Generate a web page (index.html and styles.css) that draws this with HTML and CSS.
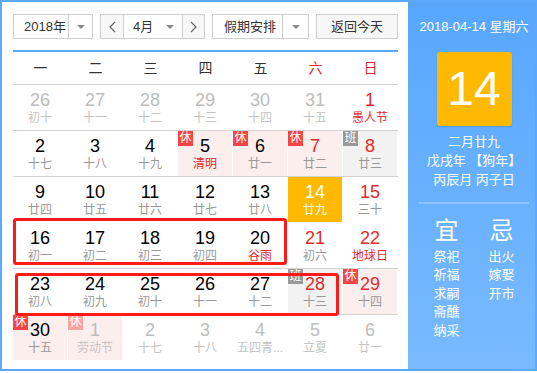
FILE: index.html
```html
<!DOCTYPE html>
<html lang="zh-CN">
<head>
<meta charset="utf-8">
<title>万年历</title>
<link rel="stylesheet" href="styles.css">
</head>
<body>
<div class="cal">
  <div class="main">
    <div class="toolbar">
      <div class="box year">
        <span class="txt">2018年</span>
        <span class="arr"><i class="tri"></i></span>
      </div>
      <div class="box month">
        <span class="nav"><svg width="7" height="12" viewBox="0 0 7 12"><polyline points="6,1 1,6 6,11" fill="none" stroke="#666" stroke-width="1.2"/></svg></span>
        <span class="mtxt">4月<i class="tri"></i></span>
        <span class="nav nav-r"><svg width="7" height="12" viewBox="0 0 7 12"><polyline points="1,1 6,6 1,11" fill="none" stroke="#666" stroke-width="1.2"/></svg></span>
      </div>
      <div class="box holiday">
        <span class="txt">假期安排</span>
        <span class="arr"><i class="tri"></i></span>
      </div>
      <div class="box btn">返回今天</div>
    </div>

    <div class="weekhead">
      <span>一</span><span>二</span><span>三</span><span>四</span><span>五</span><span class="red">六</span><span class="red">日</span>
    </div>

    <div class="rows">
      <div class="row">
        <div class="c o"><div class="n">26</div><div class="l">初十</div></div>
        <div class="c o"><div class="n">27</div><div class="l">十一</div></div>
        <div class="c o"><div class="n">28</div><div class="l">十二</div></div>
        <div class="c o"><div class="n">29</div><div class="l">十三</div></div>
        <div class="c o"><div class="n">30</div><div class="l">十四</div></div>
        <div class="c o"><div class="n">31</div><div class="l">十五</div></div>
        <div class="c r f"><div class="n">1</div><div class="l">愚人节</div></div>
      </div>
      <div class="row">
        <div class="c"><div class="n">2</div><div class="l">十七</div></div>
        <div class="c"><div class="n">3</div><div class="l">十八</div></div>
        <div class="c"><div class="n">4</div><div class="l">十九</div></div>
        <div class="c h f"><span class="tag">休</span><div class="n">5</div><div class="l">清明</div></div>
        <div class="c h"><span class="tag">休</span><div class="n">6</div><div class="l">廿一</div></div>
        <div class="c h r"><span class="tag">休</span><div class="n">7</div><div class="l">廿二</div></div>
        <div class="c w r"><span class="tag ban">班</span><div class="n">8</div><div class="l">廿三</div></div>
      </div>
      <div class="row row-today">
        <div class="c"><div class="n">9</div><div class="l">廿四</div></div>
        <div class="c"><div class="n">10</div><div class="l">廿五</div></div>
        <div class="c"><div class="n">11</div><div class="l">廿六</div></div>
        <div class="c"><div class="n">12</div><div class="l">廿七</div></div>
        <div class="c"><div class="n">13</div><div class="l">廿八</div></div>
        <div class="c t"><div class="n">14</div><div class="l">廿九</div></div>
        <div class="c r"><div class="n">15</div><div class="l">三十</div></div>
      </div>
      <div class="row">
        <div class="c"><div class="n">16</div><div class="l">初一</div></div>
        <div class="c"><div class="n">17</div><div class="l">初二</div></div>
        <div class="c"><div class="n">18</div><div class="l">初三</div></div>
        <div class="c"><div class="n">19</div><div class="l">初四</div></div>
        <div class="c f"><div class="n">20</div><div class="l">谷雨</div></div>
        <div class="c r"><div class="n">21</div><div class="l">初六</div></div>
        <div class="c r f"><div class="n">22</div><div class="l">地球日</div></div>
      </div>
      <div class="row">
        <div class="c"><div class="n">23</div><div class="l">初八</div></div>
        <div class="c"><div class="n">24</div><div class="l">初九</div></div>
        <div class="c"><div class="n">25</div><div class="l">初十</div></div>
        <div class="c"><div class="n">26</div><div class="l">十一</div></div>
        <div class="c"><div class="n">27</div><div class="l">十二</div></div>
        <div class="c w r"><span class="tag ban">班</span><div class="n">28</div><div class="l">十三</div></div>
        <div class="c h r"><span class="tag">休</span><div class="n">29</div><div class="l">十四</div></div>
      </div>
      <div class="row">
        <div class="c h"><span class="tag">休</span><div class="n">30</div><div class="l">十五</div></div>
        <div class="c h o"><span class="tag fade">休</span><div class="n">1</div><div class="l">劳动节</div></div>
        <div class="c o"><div class="n">2</div><div class="l">十七</div></div>
        <div class="c o"><div class="n">3</div><div class="l">十八</div></div>
        <div class="c o"><div class="n">4</div><div class="l">五四青...</div></div>
        <div class="c o"><div class="n">5</div><div class="l">立夏</div></div>
        <div class="c o"><div class="n">6</div><div class="l">廿一</div></div>
      </div>
    </div>
  </div>

  <div class="side">
    <div class="date">2018-04-14 星期六</div>
    <div class="today">14</div>
    <div class="lunar">
      <div>二月廿九</div>
      <div>戊戌年 【狗年】</div>
      <div>丙辰月 丙子日</div>
    </div>
    <div class="divider"></div>
    <div class="yiji">
      <div class="col">
        <div class="big">宜</div>
        <div class="items"><div>祭祀</div><div>祈福</div><div>求嗣</div><div>斋醮</div><div>纳采</div></div>
      </div>
      <div class="col">
        <div class="big">忌</div>
        <div class="items"><div>出火</div><div>嫁娶</div><div>开市</div></div>
      </div>
    </div>
  </div>

  <div class="mark mark1"></div>
  <div class="mark mark2"></div>
</div>
</body>
</html>
```

FILE: styles.css
```css
body {
  margin: 0;
  font-family: "Liberation Sans", "Noto Sans CJK SC", sans-serif;
  background: #fff;
}

.cal {
  position: relative;
  display: flex;
  width: 537px;
  height: 371px;
  box-sizing: border-box;
  border: 2px solid #5aa9fe;
  background: #fff;
}

.main {
  width: 406px;
  flex: none;
  box-sizing: border-box;
  padding: 12px 0 0 11px;
}

/* toolbar */
.toolbar {
  display: flex;
  gap: 7px;
  height: 25px;
}

.box {
  display: flex;
  box-sizing: border-box;
  height: 25px;
  border: 1px solid #cfcfcf;
  font-size: 13px;
  line-height: 23px;
  color: #333;
}

.box .txt {
  flex: 1;
  padding-left: 10px;
}

.box .arr {
  display: flex;
  align-items: center;
  justify-content: center;
  border-left: 1px solid #cfcfcf;
}

.tri {
  display: inline-block;
  width: 0;
  height: 0;
  border-left: 4px solid transparent;
  border-right: 4px solid transparent;
  border-top: 4px solid #888;
}

.year { width: 80px; }
.year .arr { width: 23px; }

.month { width: 105px; }
.month .nav {
  width: 22px;
  display: flex;
  align-items: center;
  justify-content: center;
  background: #f7f7f7;
  border-right: 1px solid #cfcfcf;
}
.month .nav-r {
  width: 21px;
  border-right: 0;
  border-left: 1px solid #cfcfcf;
}
.month .mtxt {
  flex: 1;
  display: flex;
  align-items: center;
  justify-content: space-between;
  padding: 0 8px 0 9px;
}

.holiday { width: 97px; }
.holiday .txt { padding-left: 11px; }
.holiday .arr { width: 25px; }

.btn {
  width: 82px;
  justify-content: center;
  background: #f7f7f7;
}

/* week header */
.weekhead {
  width: 385px;
  margin-top: 11px;
  border-top: 2px solid #5aa9fe;
  border-bottom: 1px solid #d2d2d2;
  display: grid;
  grid-template-columns: repeat(7, 55px);
  height: 32px;
  line-height: 32px;
  font-size: 14px;
  color: #333;
  text-align: center;
}
.weekhead .red { color: #e42a2a; }

/* grid */
.rows { width: 385px; }

.row {
  display: grid;
  grid-template-columns: repeat(7, 55px);
  border-bottom: 1px solid #d2d2d2;
}
.row.row-today { border-bottom-color: transparent; }
.row:last-child { border-bottom: 0; }

.c {
  position: relative;
  height: 45px;
  margin-right: 1px;
  text-align: center;
}

.n {
  padding-top: 5px;
  font-size: 18px;
  line-height: 20px;
  color: #000;
}

.l {
  font-size: 12px;
  line-height: 16px;
  color: #999;
  white-space: nowrap;
}

.c.r .n { color: #e42a2a; }
.c.f .l { color: #e42a2a; }
.c.o .n { color: #bdbdbd; }
.c.o .l { color: #c4c4c4; }

.c.h { background: #fdeeee; }
.c.w { background: #f2f2f2; }
.c.t { background: #ffb900; }
.c.t .n, .c.t .l { color: #fff; }

.tag {
  position: absolute;
  left: 0;
  top: 0;
  width: 15px;
  height: 15px;
  font-size: 12px;
  line-height: 15px;
  color: #fff;
  background: #f54545;
  text-align: center;
}
.tag.ban { background: #999; }
.tag.fade { background: #f9a4a4; }

/* side panel */
.side {
  flex: 1;
  box-sizing: border-box;
  padding: 15px 0 0 5px;
  background: linear-gradient(#57a7fe, #79baff);
  color: #fff;
  display: flex;
  flex-direction: column;
  align-items: center;
}

.date {
  font-size: 13px;
  line-height: 19px;
}

.today {
  width: 75px;
  height: 74px;
  margin-top: 16px;
  border-radius: 3px;
  background: #ffb900;
  box-shadow: 0 1px 2px rgba(0, 0, 0, 0.12);
  font-size: 48px;
  line-height: 74px;
  text-align: center;
}

.lunar {
  margin-top: 6px;
  font-size: 13px;
  line-height: 19px;
  text-align: center;
}

.divider {
  width: 110px;
  height: 2px;
  margin-top: 13px;
  background: #8cc4ff;
}

.yiji {
  display: grid;
  grid-template-columns: 55px 55px;
  margin-top: 12px;
  text-align: center;
}

.big {
  font-size: 24px;
  line-height: 30px;
}

.items {
  margin-top: 2px;
  font-size: 13px;
  line-height: 18.4px;
}

/* annotation overlays */
.mark {
  position: absolute;
  box-sizing: border-box;
  border: 3px solid #ff1a1a;
  border-radius: 3px;
}
.mark1 { left: 11px; top: 216px; width: 274px; height: 47px; }
.mark2 { left: 13px; top: 271px; width: 324px; height: 43px; }
```
